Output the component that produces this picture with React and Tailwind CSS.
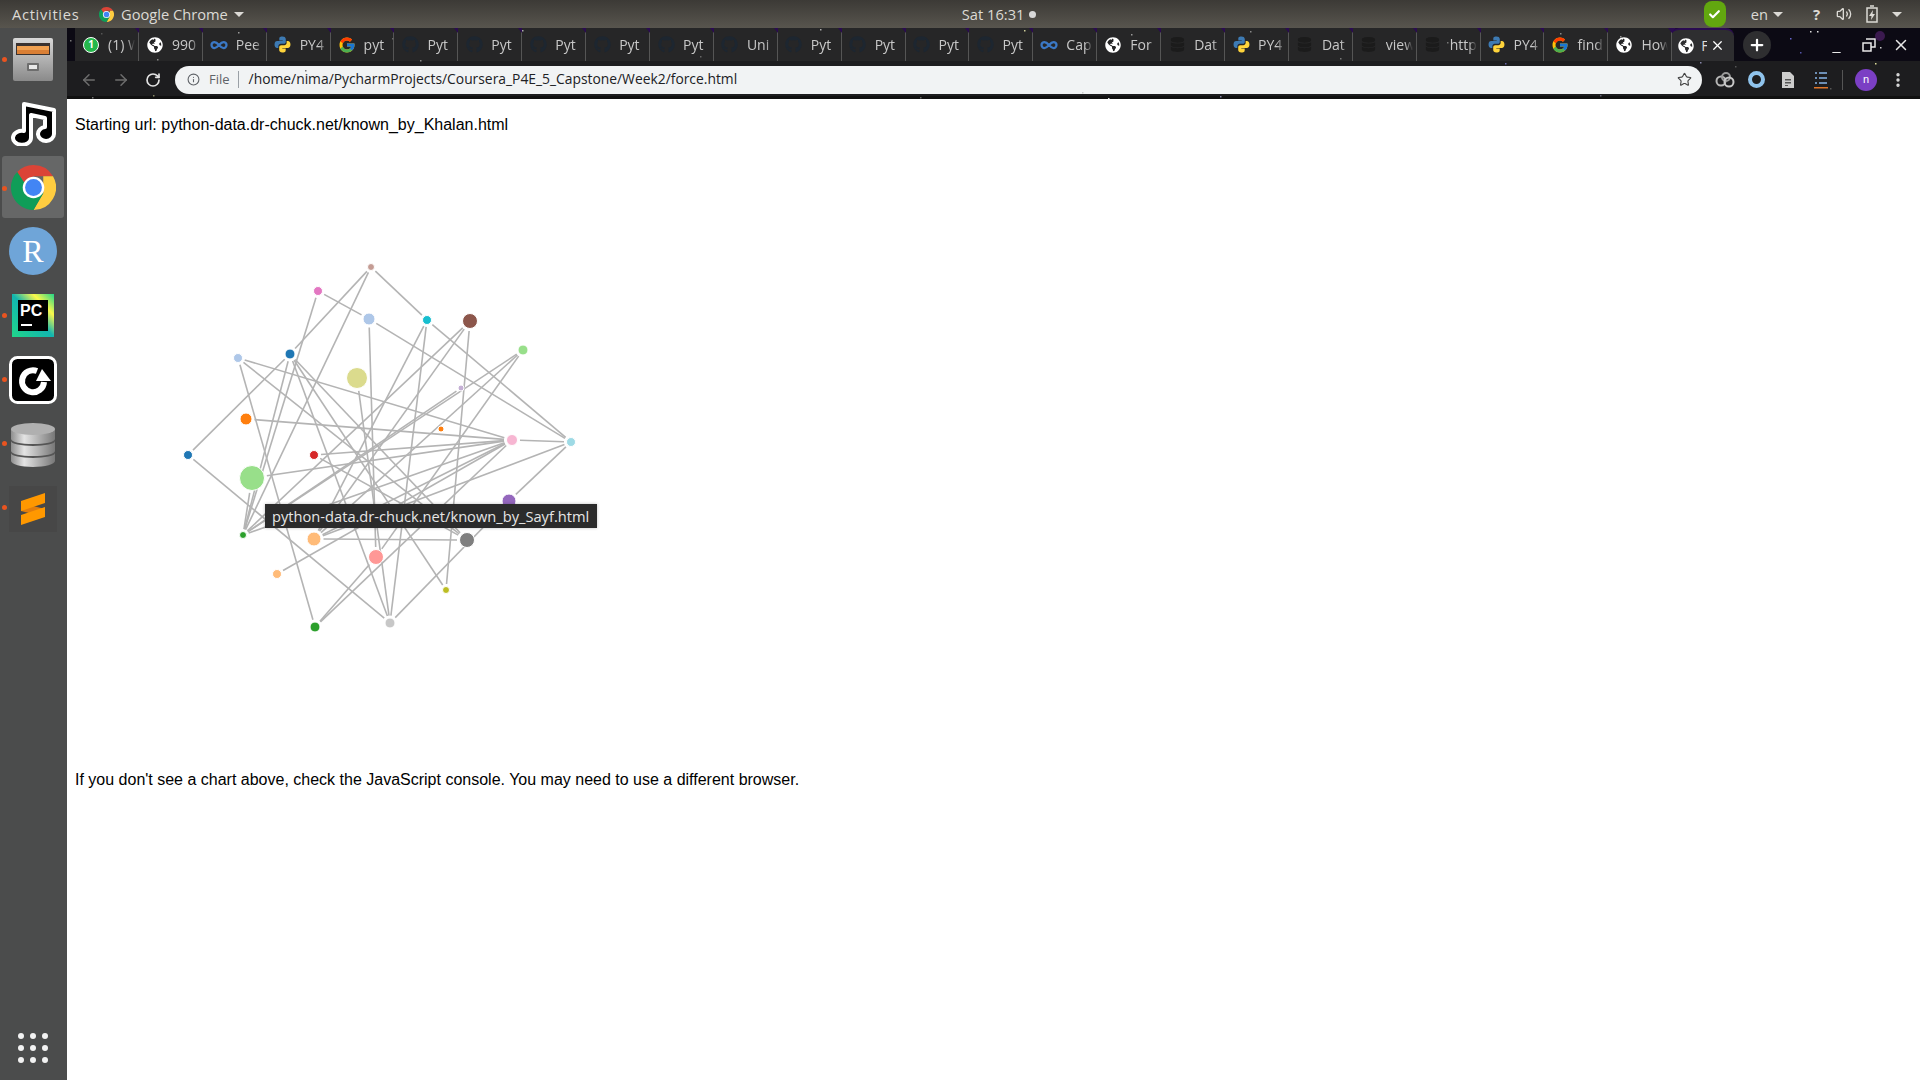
import { ArrowLeft, ArrowRight, RotateCw, Info, Star, Plus, X, Minus, EllipsisVertical, Volume2, Check, Infinity as InfinityIcon } from 'lucide-react'
import { FaGithub, FaGlobeAmericas, FaDatabase } from 'react-icons/fa'
import { FcGoogle } from 'react-icons/fc'

const nodes = {
  top: [371, 267, 3, '#c49c94'],
  magenta: [318, 291, 4, '#e377c2'],
  ltblue: [369, 319, 5.5, '#aec7e8'],
  teal: [427, 320, 4, '#17becf'],
  brown: [470, 321, 7, '#8c564b'],
  ltgreen: [523, 350, 4.5, '#98df8a'],
  blue: [290, 354, 4.5, '#1f77b4'],
  ltblue2: [238, 358, 4, '#aec7e8'],
  olivebig: [357, 378, 10, '#dbdb8d'],
  orange: [246, 419, 5.5, '#ff7f0e'],
  lav: [461, 388, 2.5, '#c5b0d5'],
  orsmall: [441, 429, 2.5, '#ff7f0e'],
  pink: [512, 440, 5, '#f7b6d2'],
  cyan: [571, 442, 4, '#9edae5'],
  blue2: [188, 455, 4, '#1f77b4'],
  red: [314, 455, 4, '#d62728'],
  biggreen: [252, 478, 12, '#98df8a'],
  purple: [509, 501, 6.5, '#9467bd'],
  dkgreen: [243, 535, 3, '#2ca02c'],
  ltorange: [314, 539, 6.5, '#ffbb78'],
  gray: [467, 540, 7, '#7f7f7f'],
  salmon: [376, 557, 7, '#ff9896'],
  ltorange2: [277, 574, 4, '#ffbb78'],
  olive: [446, 590, 3, '#bcbd22'],
  green: [315, 627, 4.5, '#2ca02c'],
  ltgray: [390, 623, 4.5, '#c7c7c7'],
}

const edges = [
  ['top', 'blue'], ['blue', 'blue2'], ['top', 'teal'], ['teal', 'cyan'], ['top', 'dkgreen'],
  ['magenta', 'ltblue'], ['magenta', 'dkgreen'], ['ltblue', 'cyan'], ['ltblue', 'salmon'],
  ['ltblue2', 'pink'], ['ltblue2', 'green'], ['ltblue2', 'gray'],
  ['blue', 'ltgray'], ['blue', 'olive'], ['blue', 'gray'], ['blue', 'dkgreen'],
  ['orange', 'pink'], ['olivebig', 'ltgray'], ['brown', 'olive'], ['brown', 'dkgreen'], ['brown', 'ltorange'],
  ['teal', 'ltorange'], ['teal', 'ltgray'], ['ltgreen', 'dkgreen'], ['ltgreen', 'ltorange'],
  ['lav', 'dkgreen'], ['pink', 'dkgreen'], ['pink', 'red'], ['pink', 'biggreen'], ['pink', 'ltorange2'],
  ['pink', 'green'], ['pink', 'ltorange'], ['cyan', 'ltorange'], ['cyan', 'pink'], ['cyan', 'purple'],
  ['purple', 'ltgray'], ['blue2', 'ltgray'], ['green', 'salmon'], ['biggreen', 'dkgreen'],
  ['ltgreen', 'salmon'], ['gray', 'ltorange'], ['red', 'gray'],
]

const tabs = [
  ['wa', '(1) W'], ['globe', '990'], ['inf', 'Pee'], ['py', 'PY4'], ['g', 'pyt'],
  ['gh', 'Pyt'], ['gh', 'Pyt'], ['gh', 'Pyt'], ['gh', 'Pyt'], ['gh', 'Pyt'],
  ['gh', 'Uni'], ['gh', 'Pyt'], ['gh', 'Pyt'], ['gh', 'Pyt'], ['gh', 'Pyt'],
  ['inf', 'Cap'], ['globe', 'For'], ['db', 'Dat'], ['py', 'PY4'], ['db', 'Dat'],
  ['db', 'view'], ['db', 'http'], ['py', 'PY4'], ['g', 'find'], ['globe', 'How'],
]

const stars = [
  [70, 40, '#777'], [101, 33, '#555'], [157, 59, '#888'], [238, 32, '#999'], [305, 70, '#777'], [392, 38, '#666'],
  [420, 60, '#888'], [522, 30, '#aaa'], [700, 56, '#666'], [820, 29, '#aaa'], [1024, 30, '#cc9'], [1131, 34, '#999'],
  [1250, 31, '#888'], [1340, 58, '#777'], [1447, 42, '#777'], [1505, 63, '#66a'], [1560, 33, '#888'], [1620, 36, '#999'],
  [1810, 31, '#ddd'], [1817, 31, '#ddd'], [1880, 47, '#ccc'], [1875, 63, '#dd9'], [1800, 52, '#55a'], [1790, 38, '#66c'],
  [1735, 66, '#555'], [1082, 92, '#ccc'], [1108, 98, '#ddd'], [920, 97, '#666'], [1220, 96, '#88a'], [92, 97, '#777'],
  [153, 95, '#886'], [1600, 95, '#667'], [1700, 62, '#88a'], [1830, 88, '#555'],
]

function Chrome({ size }) {
  return (
    <svg width={size} height={size} viewBox="0 0 48 48">
      <path fill="#db4437" d="M24 0a24 24 0 0 1 20.8 12H24L13.600 18 6.600 7.400A24 24 0 0 1 24 0z" />
      <path fill="#ffcd40" d="M44.800 12A24 24 0 0 1 24 48l10.400-18V12z" />
      <path fill="#0f9d58" d="M6.600 7.400A24 24 0 0 0 24 48l10.400-18-20.800-12z" />
      <circle cx="24" cy="24" r="11.500" fill="#fff" />
      <circle cx="24" cy="24" r="9" fill="#4285f4" />
    </svg>
  )
}

function Python() {
  return (
    <svg width="17" height="17" viewBox="0 0 16 16">
      <path fill="#3d7ab3" d="M8 .5c-3 0-3 1.200-3 2.300V4.200h3.200v.6H3C1.500 4.800.5 5.900.5 8s1 3.300 2.400 3.300h1.200V9.600c0-1.200 1-2.200 2.200-2.200h3c1 0 1.800-.8 1.800-1.800V2.800C10.900 1.300 9.800.5 8 .5z" />
      <path fill="#ffd43b" d="M8 15.500c3 0 3-1.200 3-2.300v-1.400H7.800v-.6H13c1.500 0 2.500-1.100 2.500-3.200s-1-3.300-2.400-3.300h-1.200v1.700c0 1.200-1 2.200-2.200 2.200h-3c-1 0-1.800.8-1.800 1.800v2.800c0 1.500 1.100 2.300 2.900 2.300z" />
    </svg>
  )
}

function TabIcon({ kind }) {
  if (kind === 'wa') {
    return <span className="flex h-[16px] w-[16px] items-center justify-center rounded-full border border-white bg-[#25b84c] text-[10px] font-bold text-white">1</span>
  }
  if (kind === 'globe') return <FaGlobeAmericas size={16} className="text-white" />
  if (kind === 'inf') return <InfinityIcon size={18} strokeWidth={3} className="text-[#3b78c4]" />
  if (kind === 'py') return <Python />
  if (kind === 'g') return <FcGoogle size={18} />
  if (kind === 'db') return <FaDatabase size={15} className="text-[#1b1b1b]" />
  return <FaGithub size={17} className="text-[#1d2630]" />
}

function Tab({ kind, label }) {
  return (
    <div className="relative flex h-full w-[63.900px] shrink-0 items-center border-r border-[#555] bg-[#262627] [background-clip:padding-box] pl-[7px]">
      <span className="absolute -right-[5px] top-0 h-0 w-0 border-x-[4px] border-t-[5px] border-x-transparent border-t-[#2a0b50]" />
      <span className="flex w-[18px] shrink-0 justify-center"><TabIcon kind={kind} /></span>
      <span className="ml-[8px] w-[27px] overflow-hidden whitespace-nowrap text-[14px] text-[#c8c8c8] [mask-image:linear-gradient(to_right,black_70%,transparent)]">{label}</span>
    </div>
  )
}

function Toolbar() {
  return (
    <div className="flex h-[38px] items-center border-b-[3px] border-[#111] bg-[#1d1d1f] pt-[2px]">
      <ArrowLeft size={18} className="ml-[13px] text-[#6d6d6d]" />
      <ArrowRight size={18} className="ml-[14px] text-[#6d6d6d]" />
      <RotateCw size={16} className="ml-[15px] text-[#e4e4e4]" strokeWidth={2.500} />
      <div className="ml-[14px] flex h-[28px] w-[1527px] items-center rounded-full bg-[#f1f3f4] pl-[12px] pr-[10px] font-['Open_Sans',sans-serif]">
        <Info size={13} className="text-[#5f6368]" />
        <span className="ml-[9px] text-[13px] text-[#5f6368]">File</span>
        <span className="ml-[8px] h-[17px] w-px bg-[#9aa0a6]" />
        <span className="ml-[10px] text-[13.850px] text-[#202124]">/home/nima/PycharmProjects/Coursera_P4E_5_Capstone/Week2/force.html</span>
        <Star size={15} strokeWidth={1.800} className="ml-auto text-[#444]" />
      </div>
      <svg width="20" height="16" viewBox="0 0 20 16" className="ml-[13px]">
        <circle cx="6" cy="9" r="4.500" fill="none" stroke="#b5b5b5" strokeWidth="2" />
        <circle cx="11" cy="5" r="4" fill="none" stroke="#9a9a9a" strokeWidth="2" />
        <circle cx="14" cy="10" r="4.500" fill="none" stroke="#c8c8c8" strokeWidth="2" />
      </svg>
      <span className="ml-[13px] h-[17px] w-[17px] rounded-full border-[4px] border-[#8fc3ec] bg-[#1d1d1f]" />
      <svg width="14" height="16" viewBox="0 0 14 16" className="ml-[16px]">
        <path fill="#ccc" d="M1 0h8l4 4v12H1z" />
        <path fill="#555" d="M4 7h6v1.500H4zM4 10h6v1.500H4zM4 13h3v1H4z" />
      </svg>
      <svg width="14" height="18" viewBox="0 0 14 18" className="ml-[19px]">
        <path fill="#6d8fb5" d="M1 1h2v2H1zM5 1h8v2H5zM1 6h2v2H1zM5 6h8v2H5zM1 11h2v2H1zM5 11h8v2H5z" />
        <path fill="#e0762a" d="M0 16h14v1.500H0z" />
      </svg>
      <span className="ml-[14px] h-[20px] w-px bg-[#555]" />
      <span className="ml-[12px] flex h-[22px] w-[22px] items-center justify-center rounded-full bg-[#7b3fc4] text-[11px] text-white">n</span>
      <EllipsisVertical size={18} className="ml-[12px] text-[#dcdcdc]" strokeWidth={2.500} />
    </div>
  )
}

function ForceChart() {
  const trimmed = edges.map(([a, b]) => {
    const [x1, y1, r1] = nodes[a]
    const [x2, y2, r2] = nodes[b]
    const len = Math.hypot(x2 - x1, y2 - y1)
    const ux = (x2 - x1) / len
    const uy = (y2 - y1) / len
    return { key: a + b, x1: x1 + ux * (r1 + 3), y1: y1 + uy * (r1 + 3), x2: x2 - ux * (r2 + 3), y2: y2 - uy * (r2 + 3) }
  })
  return (
    <div className="relative mt-[15px] h-[606px] w-[900px]">
      <svg width="900" height="606" viewBox="75 149 900 606">
        {trimmed.map((e) => (
          <line key={e.key} x1={e.x1} y1={e.y1} x2={e.x2} y2={e.y2} stroke="#b4b4b4" strokeWidth="1.600" />
        ))}
        {Object.entries(nodes).map(([k, [x, y, r, c]]) => (
          <circle key={k} cx={x} cy={y} r={r + 0.5} fill={c} stroke="#fff" strokeWidth="1" />
        ))}
      </svg>
      <div className="absolute left-[190px] top-[355px] flex h-[24px] w-[332px] items-center bg-[#2b2b2b] pl-[7px] font-['Open_Sans',sans-serif] text-[14.670px] whitespace-nowrap text-[#e6e6e6] shadow-[0_0_3px_rgba(0,0,0,0.25)]">
        python-data.dr-chuck.net/known_by_Sayf.html
      </div>
    </div>
  )
}

function Dock() {
  const dots = ['top-[29px]', 'top-[158px]', 'top-[285px]', 'top-[349px]', 'top-[413px]', 'top-[477px]']
  return (
    <aside className="relative flex w-[67px] shrink-0 flex-col items-center bg-[#4b4c4c] pr-[1px]">
      {dots.map((d) => <span key={d} className={`absolute left-[2px] h-[5px] w-[5px] rounded-full bg-[#e95420] ${d}`} />)}

      <svg width="42" height="45" viewBox="0 0 42 45" className="mt-[9px]">
        <defs>
          <linearGradient id="cab" x1="0" y1="0" x2="0" y2="1">
            <stop offset="0" stopColor="#d8d8d8" /><stop offset="1" stopColor="#8a8a8a" />
          </linearGradient>
        </defs>
        <rect x="1" y="1" width="40" height="43" rx="2" fill="url(#cab)" />
        <rect x="4" y="6" width="34" height="12" fill="#3a3230" />
        <rect x="5" y="9" width="32" height="4" fill="#f0a050" />
        <rect x="5" y="13" width="32" height="4" fill="#d97f35" />
        <rect x="15" y="26" width="12" height="8" rx="1" fill="#6d6d6d" />
        <rect x="17" y="28" width="8" height="4" fill="#e8e8e8" />
      </svg>

      <svg width="48" height="48" viewBox="0 0 48 48" className="mt-[16px]">
        <path d="M15 6 45 12V36A8 7 0 1 1 36 29V20L22 17V40A9 7 0 1 1 15 33Z" fill="#000" stroke="#fff" strokeWidth="4" strokeLinejoin="round" />
      </svg>

      <div className="mt-[10px] flex h-[62px] w-[62px] items-center justify-center rounded-[3px] bg-[#666767]"><Chrome size={45} /></div>

      <div className="mt-[9px] flex h-[48px] w-[48px] items-center justify-center rounded-full bg-[#6fa5d8] font-['Liberation_Serif',serif] text-[32px] text-white">R</div>

      <svg width="42" height="43" viewBox="0 0 42 43" className="mt-[19px]">
        <defs>
          <linearGradient id="pc" x1="0" y1="1" x2="1" y2="0">
            <stop offset="0" stopColor="#21d789" /><stop offset="0.5" stopColor="#12b5b0" /><stop offset="0.75" stopColor="#fcf84a" /><stop offset="1" stopColor="#21d789" />
          </linearGradient>
        </defs>
        <rect width="42" height="43" fill="url(#pc)" />
        <rect x="6" y="6" width="30" height="31" fill="#000" />
        <text x="8" y="22" fontFamily="Liberation Sans, sans-serif" fontWeight="700" fontSize="16" fill="#fff">PC</text>
        <rect x="9" y="30" width="11" height="2" fill="#fff" />
      </svg>

      <svg width="48" height="48" viewBox="0 0 48 48" className="mt-[19px]">
        <rect x="1.500" y="1.500" width="45" height="45" rx="7" fill="#000" stroke="#fff" strokeWidth="3" />
        <path d="M28 15A11 11 0 1 0 35 26" fill="none" stroke="#fff" strokeWidth="6" />
        <path d="M33 13 42 25H27Z" fill="#fff" />
      </svg>

      <svg width="46" height="44" viewBox="0 0 46 44" className="mt-[19px]">
        <defs>
          <linearGradient id="dbs" x1="0" y1="0" x2="1" y2="0">
            <stop offset="0" stopColor="#8e8e8e" /><stop offset="0.3" stopColor="#e4e4e4" /><stop offset="1" stopColor="#777" />
          </linearGradient>
        </defs>
        <path d="M1 30v8c0 3 10 6 22 6s22-3 22-6v-8z" fill="url(#dbs)" />
        <ellipse cx="23" cy="30" rx="22" ry="5" fill="#555" />
        <path d="M1 18v10c0 3 10 5 22 5s22-2 22-5V18z" fill="url(#dbs)" />
        <ellipse cx="23" cy="18" rx="22" ry="5" fill="#555" />
        <path d="M1 6v10c0 3 10 5 22 5s22-2 22-5V6z" fill="url(#dbs)" />
        <ellipse cx="23" cy="6" rx="22" ry="6" fill="#b0b0b0" />
      </svg>

      <div className="mt-[19px] flex h-[46px] w-[48px] items-center justify-center bg-[#474747]">
        <svg width="24" height="32" viewBox="0 0 24 32">
          <path fill="#e27d0c" d="M0 10 24 16V24L0 18Z" />
          <path fill="#ff9800" d="M24 0V10L0 18V8Z" />
          <path fill="#ff9800" d="M24 14V24L0 32V22Z" />
        </svg>
      </div>

      <div className="mt-auto mb-[17px] grid grid-cols-3 gap-[6px]">
        {[0, 1, 2, 3, 4, 5, 6, 7, 8].map((i) => <span key={i} className="h-[6px] w-[6px] rounded-full bg-[#f2f2f2]" />)}
      </div>
    </aside>
  )
}

export default function App() {
  return (
    <div className="relative flex h-[1080px] w-[1920px] flex-col overflow-hidden bg-white font-['Liberation_Sans',sans-serif]">
      {/* ubuntu top bar */}
      <header className="flex h-[28px] shrink-0 items-center bg-linear-to-b from-[#3c3a36] to-[#58554e] font-['Open_Sans',sans-serif] text-[14.670px] text-[#dcdad5]">
        <span className="ml-[12px] w-[66px] font-medium tracking-[0.700px] whitespace-nowrap">Activities</span>
        <span className="ml-[21px]"><Chrome size={15} /></span>
        <span className="ml-[7px] font-medium whitespace-nowrap">Google Chrome</span>
        <span className="ml-[6px] h-0 w-0 border-x-[5px] border-t-[5px] border-x-transparent border-t-[#dcdad5]" />
        <span className="ml-[718px] w-[64px] font-medium whitespace-nowrap">Sat 16:31</span>
        <span className="ml-[3px] h-[7px] w-[7px] rounded-full bg-[#d8d8d8]" />
        <span className="ml-[668px] flex h-[26px] w-[22px] items-center justify-center rounded-[8px] bg-[#62a70f]"><Check size={13} strokeWidth={4} className="text-white" /></span>
        <span className="ml-[25px] font-medium">en</span>
        <span className="ml-[5px] h-0 w-0 border-x-[5px] border-t-[5px] border-x-transparent border-t-[#dcdad5]" />
        <span className="ml-[30px] text-[15px] font-bold">?</span>
        <Volume2 size={16} className="ml-[16px]" />
        <svg width="12" height="18" viewBox="0 0 12 18" className="ml-[14px]">
          <path fill="none" stroke="#dcdad5" strokeWidth="1.500" d="M1 3h10v14H1zM4 1h4" />
          <path fill="#dcdad5" d="M7 5 3 11h2.500L5 15l4-6H6.500z" />
        </svg>
        <span className="ml-[14px] h-0 w-0 border-x-[5px] border-t-[5px] border-x-transparent border-t-[#dcdad5]" />
      </header>

      <div className="flex min-h-0 flex-1">
        <Dock />
        <main className="relative min-w-0 flex-1">
          {/* tab strip */}
          <div className="flex h-[33px] items-stretch bg-[#0c0a14] pl-[8px] font-['Open_Sans',sans-serif]">
            {tabs.map(([kind, label], i) => <Tab key={i} kind={kind} label={label} />)}
            <div className="ml-[-1px] flex h-full w-[63px] shrink-0 items-center rounded-t-[8px] border-t-2 border-[#2a0b50] bg-[#2e2e30] pl-[7px]">
              <FaGlobeAmericas size={16} className="text-white" />
              <span className="ml-[7px] w-[6px] overflow-hidden text-[14px] text-[#ddd]">F</span>
              <X size={15} className="ml-[3px] text-white" />
            </div>
            <span className="ml-[9px] flex h-[28px] w-[28px] items-center justify-center self-center rounded-full bg-[#2e2e30]"><Plus size={18} strokeWidth={3} className="text-white" /></span>
            <Minus size={15} className="ml-[58px] self-end pb-[2px] text-[#e8e8e8]" />
            <svg width="14" height="14" viewBox="0 0 14 14" className="ml-[18px] self-center">
              <path fill="none" stroke="#e8e8e8" strokeWidth="1.500" d="M4 1h9v8H9M1 5h8v8H1z" />
            </svg>
            <X size={18} className="ml-[16px] self-center text-[#e8e8e8]" />
          </div>
          <Toolbar />
          {/* stars from the browser theme */}
          <svg width="1853" height="71" viewBox="67 28 1853 71" className="pointer-events-none absolute left-0 top-0">
            <circle cx="1880" cy="36" r="5" fill="#6a2a8a" opacity=".5" />
            {stars.map(([x, y, c]) => <rect key={`${x}-${y}`} x={x} y={y} width="1.500" height="1.500" fill={c} />)}
          </svg>

          <div className="px-[8px] pt-[17px] text-[16px] leading-[18px] text-black">
            <p>Starting url: python-data.dr-chuck.net/known_by_Khalan.html</p>
            <ForceChart />
            <p className="mt-[16px]">If you don't see a chart above, check the JavaScript console. You may need to use a different browser.</p>
          </div>
        </main>
      </div>
    </div>
  )
}
